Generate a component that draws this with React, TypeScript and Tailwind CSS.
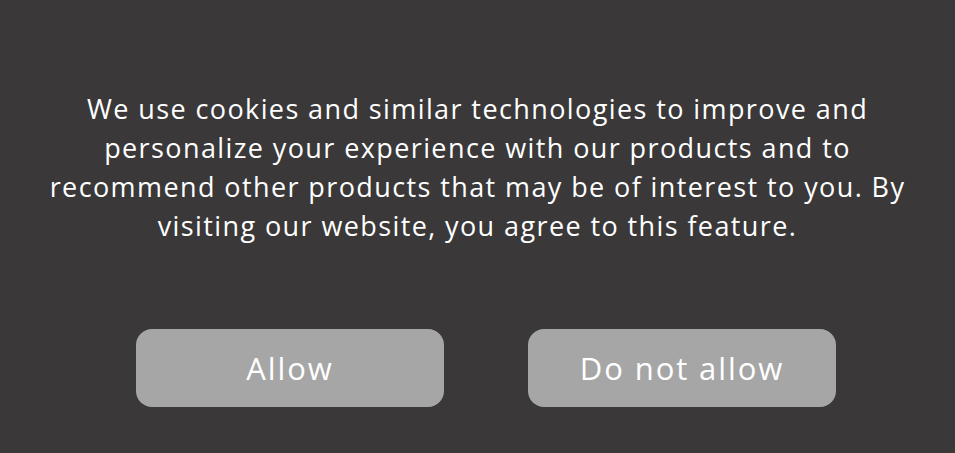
import { FC } from 'react';

const App: FC = () => (
  <div className="flex h-[453px] w-full flex-col items-center bg-[#3a3839] font-['Open_Sans',sans-serif] text-white">
    <p className="mt-[89px] text-center text-[27px] leading-[39px] tracking-[1.4px]">
      We use cookies and similar technologies to improve and
      <br />
      personalize your experience with our products and to
      <br />
      recommend other products that may be of interest to you. By
      <br />
      visiting our website, you agree to this feature.
    </p>
    <div className="mt-[84px] flex gap-[84px] pl-[17px]">
      <button className="h-[78px] w-[308px] rounded-[16px] bg-[#a6a6a6] text-[31px] tracking-[1.9px]">
        Allow
      </button>
      <button className="h-[78px] w-[308px] rounded-[16px] bg-[#a6a6a6] text-[31px] tracking-[1.9px]">
        Do not allow
      </button>
    </div>
  </div>
);

export default App;
